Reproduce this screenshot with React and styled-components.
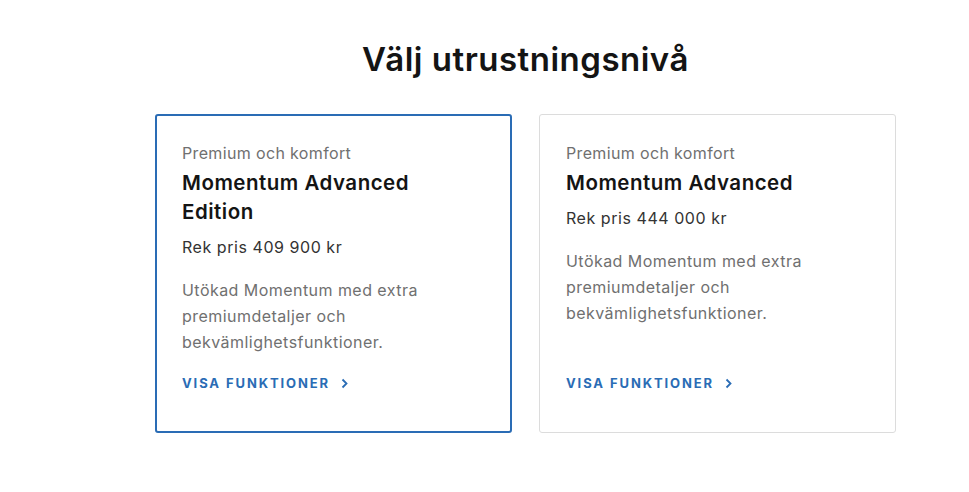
import React from "react";
import styled, { createGlobalStyle } from "styled-components";

const Global = createGlobalStyle`
  html, body { margin: 0; padding: 0; background: #fff; }
  body { font-family: Inter, "Noto Sans", "Liberation Sans", sans-serif; color: #141414; }
`;

const Section = styled.section`
  width: 741px;
  margin-left: 155px;
  padding-top: 39px;
`;

const Heading = styled.h1`
  margin: 0 0 35px;
  text-align: center;
  font-size: 33px;
  line-height: 40px;
  font-weight: 600;
  color: #141414;
  letter-spacing: 0.5px;
`;

const Grid = styled.div`
  display: grid;
  grid-template-columns: 1fr 1fr;
  gap: 27px;
`;

const Card = styled.div`
  display: flex;
  flex-direction: column;
  box-sizing: border-box;
  border-radius: 3px;
  border: ${(p) => (p.$selected ? "2px solid #2a6cb5" : "1px solid #dcdcdc")};
  padding: ${(p) => (p.$selected ? "25px 25px 38px" : "26px 26px 39px")};
  min-height: 319px;
`;

const Eyebrow = styled.div`
  font-size: 16px;
  line-height: 24px;
  color: #707070;
  letter-spacing: 0.35px;
`;

const Title = styled.div`
  margin-top: 3px;
  font-size: 20.5px;
  line-height: 29px;
  font-weight: 600;
  color: #141414;
  letter-spacing: 0.5px;
  max-width: 260px;
`;

const Price = styled.div`
  margin-top: 9px;
  font-size: 16px;
  line-height: 24px;
  color: #333;
  letter-spacing: 0.55px;
`;

const Desc = styled.p`
  margin: 18px 0 0;
  font-size: 16px;
  line-height: 26px;
  color: #707070;
  letter-spacing: 0.45px;
  max-width: 260px;
`;

const Link = styled.a`
  margin-top: auto;
  padding-top: 16px;
  display: inline-flex;
  align-items: center;
  gap: 11px;
  font-size: 13px;
  line-height: 20px;
  font-weight: 700;
  letter-spacing: 1.9px;
  color: #2a6cb5;
  text-decoration: none;
  text-transform: uppercase;
`;

const Chevron = () => (
  <svg width="7" height="11" viewBox="0 0 7 11" fill="none">
    <path d="M1.5 1.5L5.5 5.5L1.5 9.5" stroke="#2a6cb5" strokeWidth="1.8" />
  </svg>
);

const items = [
  {
    title: "Momentum Advanced Edition",
    price: "Rek pris 409 900 kr",
    selected: true,
  },
  {
    title: "Momentum Advanced",
    price: "Rek pris 444 000 kr",
    selected: false,
  },
];

export default function App() {
  return (
    <>
      <Global />
      <Section>
        <Heading>Välj utrustningsnivå</Heading>
        <Grid>
          {items.map((it) => (
            <Card key={it.title} $selected={it.selected}>
              <Eyebrow>Premium och komfort</Eyebrow>
              <Title>{it.title}</Title>
              <Price>{it.price}</Price>
              <Desc>Utökad Momentum med extra premiumdetaljer och bekvämlighetsfunktioner.</Desc>
              <Link href="#">
                Visa funktioner <Chevron />
              </Link>
            </Card>
          ))}
        </Grid>
      </Section>
    </>
  );
}
